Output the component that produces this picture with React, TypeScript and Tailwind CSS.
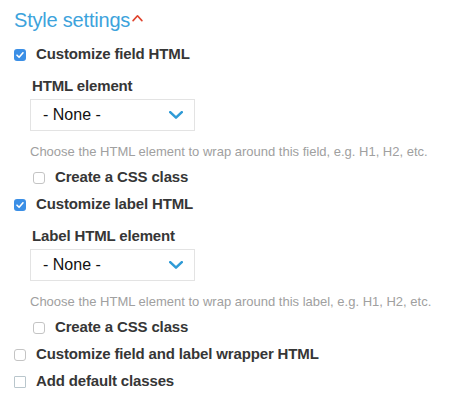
import { useState } from "react";

type BoxProps = { checked: boolean; onChange: () => void; variant?: "plain" | "square" };

function Box({ checked, onChange, variant = "plain" }: BoxProps) {
  if (checked) {
    return (
      <button
        onClick={onChange}
        className="flex h-3 w-3 shrink-0 items-center justify-center rounded-[3px] bg-[#3b8fe6]"
      >
        <svg viewBox="0 0 12 12" className="h-3 w-3">
          <path d="M3 6.2 L5.1 8.3 L9 3.8" fill="none" stroke="white" strokeWidth="1.6" strokeLinecap="round" strokeLinejoin="round" />
        </svg>
      </button>
    );
  }
  return (
    <button
      onClick={onChange}
      className={
        variant === "square"
          ? "h-3 w-3 shrink-0 rounded-[1px] border border-[#b9c6cc] bg-white"
          : "h-3 w-3 shrink-0 rounded-[3px] border border-[#c4c4c4] bg-white"
      }
    />
  );
}

function CheckRow({
  label,
  checked,
  onChange,
  indent,
  variant,
}: {
  label: string;
  checked: boolean;
  onChange: () => void;
  indent?: boolean;
  variant?: "plain" | "square";
}) {
  return (
    <div className={`flex h-[27px] items-center gap-[10px] ${indent ? "pl-[33px]" : "pl-[14px]"}`}>
      <Box checked={checked} onChange={onChange} variant={variant} />
      <span className="text-[15px] font-bold tracking-[-0.15px] text-[#363636]">{label}</span>
    </div>
  );
}

function Select({ label, help }: { label: string; help: string }) {
  return (
    <div className="pl-[30px]">
      <div className="h-[31px] pl-[2px] pt-[9px] text-[15px] leading-[18px] font-bold tracking-[-0.15px] text-[#363636]">{label}</div>
      <div className="flex h-[32px] w-[165px] items-center justify-between border border-[#e3e3e3] bg-white pl-[12px] pr-[11px]">
        <span className="text-[16px] text-[#111]">- None -</span>
        <svg viewBox="0 0 14 8" className="h-[8px] w-[14px]">
          <path d="M1.2 1.2 L7 6.6 L12.8 1.2" fill="none" stroke="#2f9bd6" strokeWidth="2.5" strokeLinecap="round" strokeLinejoin="round" />
        </svg>
      </div>
      <p className="h-[33px] pt-[13px] text-[13px] leading-[16px] text-[#a0a0a0]">{help}</p>
    </div>
  );
}

export default function App() {
  const [state, setState] = useState({
    field: true,
    fieldCss: false,
    label: true,
    labelCss: false,
    wrapper: false,
    defaults: false,
  });
  const toggle = (k: keyof typeof state) => setState((s) => ({ ...s, [k]: !s[k] }));

  return (
    <main className="min-h-screen bg-white pt-[5px] font-['Liberation_Sans',Arial,sans-serif]">
      {/* Header */}
      <div className="flex h-[30px] items-center pl-[14px]">
        <span className="text-[20px] font-light tracking-[-0.2px] text-[#3da3dc]">Style settings</span>
        <svg viewBox="0 0 12 8" className="ml-[2px] mb-[4px] h-[8px] w-[11px]">
          <path d="M1.2 6.8 L6 1.6 L10.8 6.8" fill="none" stroke="#e0442e" strokeWidth="1.8" strokeLinecap="round" strokeLinejoin="round" />
        </svg>
      </div>

      <div className="mt-[6px] flex flex-col">
        <CheckRow label="Customize field HTML" checked={state.field} onChange={() => toggle("field")} />
        <Select label="HTML element" help="Choose the HTML element to wrap around this field, e.g. H1, H2, etc." />
        <CheckRow label="Create a CSS class" checked={state.fieldCss} onChange={() => toggle("fieldCss")} indent />
        <CheckRow label="Customize label HTML" checked={state.label} onChange={() => toggle("label")} />
        <Select label="Label HTML element" help="Choose the HTML element to wrap around this label, e.g. H1, H2, etc." />
        <CheckRow label="Create a CSS class" checked={state.labelCss} onChange={() => toggle("labelCss")} indent />
        <CheckRow label="Customize field and label wrapper HTML" checked={state.wrapper} onChange={() => toggle("wrapper")} />
        <CheckRow label="Add default classes" checked={state.defaults} onChange={() => toggle("defaults")} variant="square" />
      </div>
    </main>
  );
}
